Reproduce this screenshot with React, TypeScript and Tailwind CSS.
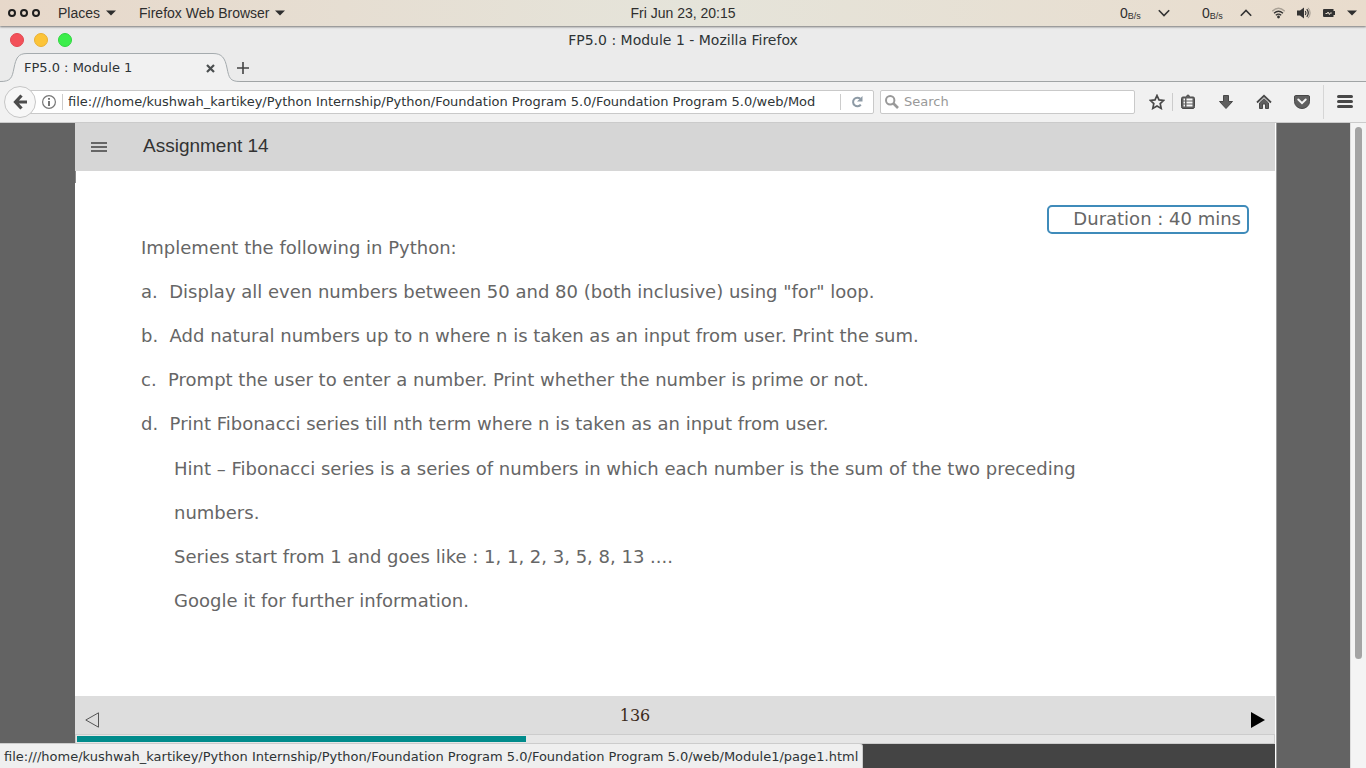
import type { ReactNode } from "react";

const uiFont = "font-['DejaVu_Sans',sans-serif]";

function Caret() {
  return (
    <svg width="10" height="6" viewBox="0 0 10 6" fill="#2e2e2e" aria-hidden="true">
      <path d="M0 .5h10L5 5.5z" />
    </svg>
  );
}

function Speed({ up }: { up?: boolean }) {
  return (
    <div className="flex items-center gap-4">
      <span className="flex w-[22px] items-baseline text-[14px]">
        0<sub className="bottom-0 translate-y-px text-[9px] leading-none">B/s</sub>
      </span>
      <svg width="12" height="8" viewBox="0 0 12 8" fill="none" stroke="#333" strokeWidth="1.6" aria-hidden="true">
        <path d={up ? "M.8 6.8 6 1.4l5.2 5.4" : "M.8 1.2 6 6.6l5.2-5.4"} />
      </svg>
    </div>
  );
}

function DesktopBar() {
  return (
    <header className="relative z-10 grid h-[26px] shrink-0 grid-cols-[1fr_auto_1fr] items-center bg-linear-to-r from-[#e7d8ca] via-[#e5e4da] to-[#e9dccd] font-['Liberation_Sans',sans-serif] text-[14px] leading-4 text-[#2e2e2e] shadow-[0_1px_2px_#777]">
      <div className="flex items-center pl-2">
        <button aria-label="Activities" className="flex gap-1">
          {[0, 1, 2].map((n) => (
            <span key={n} className="size-2 rounded-full border-2 border-[#1e1e1e]" />
          ))}
        </button>
        <button className="ml-[18px] flex items-center gap-[6px]">
          Places <Caret />
        </button>
        <button className="ml-[23px] flex items-center gap-[6px]">
          Firefox Web Browser <Caret />
        </button>
      </div>
      <time>Fri Jun 23, 20:15</time>
      <div className="flex items-center justify-end pr-[9px]">
        <div className="flex gap-8">
          <Speed />
          <Speed up />
        </div>
        <button aria-label="System menu" className="ml-5 flex items-center gap-3">
          <svg width="13" height="12" viewBox="0 0 13 12" fill="none" strokeWidth="1.3" aria-hidden="true">
            <path d="M.3 4.2Q6.5-1.600 12.700 4.200" stroke="#aaa297" />
            <path d="M2 6.200q4.500-4 9 0M3.800 8.200q2.700-2.300 5.400 0" stroke="#333" />
            <circle cx="6.500" cy="10" r="1.400" fill="#333" />
          </svg>
          <svg width="14" height="12" viewBox="0 0 14 12" fill="none" stroke="#333" strokeWidth="1.200" aria-hidden="true">
            <path d="M0 3.600h3L7 .5v11L3 8.400H0z" fill="#333" stroke="none" />
            <path d="M8.300 4q1.400 2 0 4" />
            <path d="M9.800 2.200q3 3.800 0 7.600" />
            <path d="M11.200.8q3.800 5.200 0 10.400" stroke="#9a9389" strokeWidth="1" />
          </svg>
          <svg width="12" height="8" viewBox="0 0 12 8" aria-hidden="true">
            <path d="M1 0h9.500v2H12v4h-1.500v2H1Q0 8 0 7V1q0-1 1-1z" fill="#333" />
            <path d="M2.500 4.500h1.800L5 3l1.400 2.500.8-1.500h1.600" stroke="#e8ded0" fill="none" />
          </svg>
          <Caret />
        </button>
      </div>
    </header>
  );
}

function TitleBar() {
  return (
    <div className="grid h-[27px] shrink-0 grid-cols-[1fr_auto_1fr] items-center bg-[#ebebeb] text-[14px] leading-5 text-[#2e3436]">
      <div className="flex gap-[10px] pl-[10px]">
        <button aria-label="Close window" className="size-[14px] rounded-full border border-[#e2474f] bg-[#f35059]" />
        <button aria-label="Minimize window" className="size-[14px] rounded-full border border-[#eab032] bg-[#fcc438]" />
        <button aria-label="Maximize window" className="size-[14px] rounded-full border border-[#2fd63f] bg-[#3cee4b]" />
      </div>
      <h1>FP5.0 : Module 1 - Mozilla Firefox</h1>
    </div>
  );
}

function TabStrip() {
  return (
    <div className="relative flex h-[29px] shrink-0 items-center border-b border-[#a0a4a5] bg-[#ebebeb] text-[13px] text-[#2e3436]">
      <svg className="absolute top-0 left-0" width="240" height="29" viewBox="0 0 240 29" aria-hidden="true">
        <path d="M0 28.500C11 28.500 12 25 14 15S18 .5 27 .5H213C222 .5 225 5 227 15s3 13.500 13 13.500V29H0z" fill="#f1f1f1" />
        <path d="M0 28.500C11 28.500 12 25 14 15S18 .5 27 .5H213C222 .5 225 5 227 15s3 13.500 13 13.500" fill="none" stroke="#a5abae" />
      </svg>
      <div className="relative flex w-[215px] items-center justify-between pt-[2px] pl-6">
        <span>FP5.0 : Module 1</span>
        <button aria-label="Close tab">
          <svg width="9" height="9" viewBox="0 0 9 9" stroke="#4b4f50" strokeWidth="2.200" aria-hidden="true">
            <path d="m1 1 7 7M8 1 1 8" />
          </svg>
        </button>
      </div>
      <button aria-label="New tab" className="relative ml-[22px] pt-[2px]">
        <svg width="12" height="12" viewBox="0 0 12 12" stroke="#444" strokeWidth="1.600" aria-hidden="true">
          <path d="M6 0v12M0 6h12" />
        </svg>
      </button>
    </div>
  );
}

function ToolButton({ label, children }: { label: string; children: ReactNode }) {
  return (
    <button aria-label={label} className="flex size-4 items-center justify-center">
      <svg width="16" height="16" viewBox="0 0 16 16" fill="#606060" stroke="#484848" strokeWidth="1" aria-hidden="true">
        {children}
      </svg>
    </button>
  );
}

function Toolbar() {
  return (
    <div className="flex h-[41px] shrink-0 items-center border-b border-[#cbcbcb] bg-[#f1f1f1] pr-[13px] text-[13px] text-[#2e3436]">
      <button aria-label="Back" className="relative z-10 ml-1 flex size-8 shrink-0 items-center justify-center rounded-full border border-[#c6c6c6] bg-[#f7f7f7]">
        <svg width="14" height="16" viewBox="0 0 14 16" fill="none" stroke="#4c4c4c" strokeWidth="3.200" aria-hidden="true">
          <path d="M8.500 1.500 2.500 8l6 6.500M2.500 8H14" />
        </svg>
      </button>
      <div className="-ml-2 flex h-6 flex-1 items-center rounded-xs border border-[#c9c9c9] bg-white pl-[13px]">
        <button aria-label="Site information" className="mr-[6px] shrink-0">
          <svg width="14" height="14" viewBox="0 0 14 14" aria-hidden="true">
            <circle cx="7" cy="7" r="6.400" fill="none" stroke="#777" strokeWidth="1.200" />
            <path d="M6.100 3h1.800v1.700H6.100zM6.100 6h1.800v5H6.100z" fill="#666" />
          </svg>
        </button>
        <input
          aria-label="Address"
          className="h-4 min-w-0 flex-1 border-x border-[#ccc] bg-transparent pl-[5px] outline-none"
          defaultValue="file:///home/kushwah_kartikey/Python Internship/Python/Foundation Program 5.0/Foundation Program 5.0/web/Mod"
        />
        <button aria-label="Reload" className="mx-[10px] shrink-0">
          <svg width="12" height="12" viewBox="0 0 12 12" aria-hidden="true">
            <path d="M9.300 2.800A4.300 4.300 0 1 0 9.800 8.600" fill="none" stroke="#8d9aa5" strokeWidth="2" />
            <path d="M11.500 0v5.500H6z" fill="#8d9aa5" />
          </svg>
        </button>
      </div>
      <label className="ml-[6px] flex h-6 w-[255px] items-center gap-[5px] rounded-xs border border-[#c9c9c9] bg-white pl-1">
        <svg width="14" height="14" viewBox="0 0 14 14" fill="none" stroke="#999" aria-hidden="true">
          <circle cx="5.200" cy="5.200" r="4.200" strokeWidth="2" />
          <path d="m8.500 8.500 4.500 4.500" strokeWidth="2.600" />
        </svg>
        <input aria-label="Search" placeholder="Search" className="min-w-0 flex-1 bg-transparent outline-none placeholder:text-[#999]" />
      </label>
      <div className="ml-[14px] flex items-center gap-[7px]">
        <ToolButton label="Bookmark this page">
          <path d="m8 1.500 2 4.400 4.700.5-3.500 3.200 1 4.800L8 12l-4.200 2.400 1-4.800L1.300 6.400 6 5.900z" fill="none" strokeWidth="1.700" />
        </ToolButton>
        <span className="h-[18px] w-px bg-[#ccc]" />
        <ToolButton label="Show bookmarks">
          <path d="M3 3h2.500L8 .8 10.500 3H13q1.500 0 1.500 1.500v8Q14.500 14.500 13 14.500H3q-1.500 0-1.500-2v-8Q1.500 3 3 3z" />
          <path d="M3.500 5.500h1.500M6.500 5.500h6M3.500 8.500h1.500M6.500 8.500h6M3.500 11.500h1.500M6.500 11.500h6" stroke="#f8f8f8" strokeWidth="2" />
        </ToolButton>
      </div>
      <div className="ml-[22px] flex items-center gap-[22px]">
        <ToolButton label="Downloads">
          <path d="M5.500 1.500h5v6h4L8 14.500 1.500 7.500h4z" />
        </ToolButton>
        <ToolButton label="Home">
          <path d="m1 8.500 7-6.700 7 6.700" fill="none" strokeWidth="1.800" />
          <path d="M3.500 9 8 4.700 12.500 9v5.500h-3V10h-3v4.500h-3z" />
        </ToolButton>
        <ToolButton label="Save to Pocket">
          <path d="M1.500 1.500h13Q15.500 1.500 15.500 3v4.500A7.500 7 0 0 1 .5 7.500V3Q.5 1.500 1.500 1.500z" />
          <path d="m4.300 5.500 3.700 3.600 3.700-3.600" fill="none" stroke="#f5f5f5" strokeWidth="2" strokeLinecap="round" />
        </ToolButton>
      </div>
      <span className="ml-[13px] h-[34px] w-px bg-[#d6d6d6]" />
      <div className="ml-[13px] flex">
        <ToolButton label="Open menu">
          <path d="M1.500 2.500h13M1.500 7.500h13M1.500 12.500h13" strokeWidth="3" strokeLinecap="round" />
        </ToolButton>
      </div>
    </div>
  );
}

const tasks = [
  'a.  Display all even numbers between 50 and 80 (both inclusive) using "for" loop.',
  "b.  Add natural numbers up to n where n is taken as an input from user. Print the sum.",
  "c.  Prompt the user to enter a number. Print whether the number is prime or not.",
  "d.  Print Fibonacci series till nth term where n is taken as an input from user.",
];

function Slide() {
  return (
    <article className="flex min-w-0 flex-1 flex-col border-r border-white bg-white">
      <header className="flex h-12 shrink-0 items-center bg-[#d6d6d6] pl-4">
        <button aria-label="Contents" className="flex w-4 flex-col gap-[2px]">
          <span className="h-[2px] bg-[#666]" />
          <span className="h-[2px] bg-[#666]" />
          <span className="h-[2px] bg-[#666]" />
        </button>
        <h2 className="ml-9 pb-[2px] font-['Liberation_Sans',sans-serif] text-[19px] leading-6 text-[#333]">Assignment 14</h2>
      </header>
      <div className="flex flex-1 flex-col text-[18px] text-[#666]">
        <div className="h-3 w-px bg-[#888]" />
        <p className="mt-[22px] mr-[26px] self-end rounded-[5px] border-2 border-[#3f8bba] pr-[6px] pb-px pl-6 leading-6">
          Duration : 40 mins
        </p>
        <div className="-mt-[8px] px-[66px] leading-[44px]">
          <p>Implement the following in Python:</p>
          <ul>
            {tasks.map((task) => (
              <li key={task} className="whitespace-pre-wrap">{task}</li>
            ))}
          </ul>
          <div className="max-w-[960px] pt-px pl-[33px]">
            <p>Hint – Fibonacci series is a series of numbers in which each number is the sum of the two preceding numbers.</p>
            <p>Series start from 1 and goes like : 1, 1, 2, 3, 5, 8, 13 ....</p>
            <p>Google it for further information.</p>
          </div>
        </div>
      </div>
      <footer className="shrink-0 bg-[#ddd]">
        <div className="grid h-[38px] grid-cols-[1fr_auto_1fr] items-center px-[10px]">
          <button aria-label="Previous page" className="justify-self-start pt-[10px]">
            <svg width="14" height="16" viewBox="0 0 14 16" aria-hidden="true">
              <path d="M13.500.8v14.400L.8 8z" fill="none" stroke="#555" />
            </svg>
          </button>
          <span className="mr-20 pt-[2px] font-['DejaVu_Serif',serif] text-[16px] leading-6 text-[#3b2a1a]">136</span>
          <button aria-label="Next page" className="justify-self-end pt-[10px]">
            <svg width="14" height="16" viewBox="0 0 14 16" aria-hidden="true">
              <path d="M0 0v16l14-8z" />
            </svg>
          </button>
        </div>
        <div className="h-[10px] border border-[#ccc] bg-[#e6e6e6] p-px" role="progressbar" aria-label="Progress" aria-valuenow={37}>
          <div className="h-[6px] w-3/8 bg-[#008b8b]" />
        </div>
        <div className="h-6 bg-[#444]" />
      </footer>
    </article>
  );
}

export default function App() {
  return (
    <div className={`relative flex h-screen flex-col overflow-hidden ${uiFont}`}>
      <DesktopBar />
      <TitleBar />
      <TabStrip />
      <Toolbar />
      <main className="flex min-h-0 flex-1 bg-[#636363]">
        <div className="w-[75px] shrink-0" />
        <Slide />
        <div className="w-[74px] shrink-0 border-l border-[#999]" />
        <div className="w-4 shrink-0 border-l border-[#ddd] bg-[#f4f4f4] px-1 pt-1">
          <div className="h-[532px] w-[7px] rounded-full bg-[#a4a4a4]" />
        </div>
      </main>
      <div className="absolute bottom-0 left-0 h-[25px] rounded-tr-sm border-t border-r border-[#ccc] bg-[#efefef] px-1 text-[13px] leading-[26px] text-[#2e3436]">
        file:///home/kushwah_kartikey/Python Internship/Python/Foundation Program 5.0/Foundation Program 5.0/web/Module1/page1.html
      </div>
    </div>
  );
}
